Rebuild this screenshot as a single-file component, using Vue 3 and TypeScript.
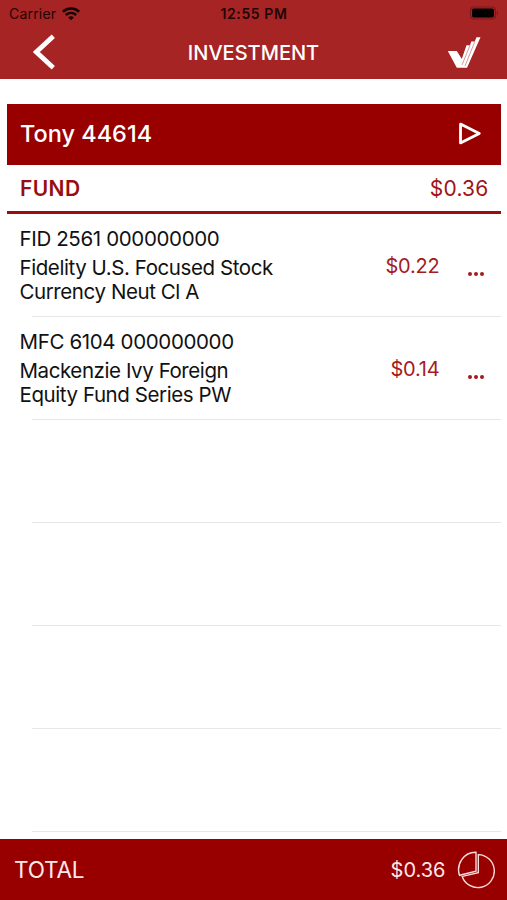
<script setup lang="ts">
interface Fund {
  code: string
  name: string[]
  amount: string
}

const funds: Fund[] = [
  { code: 'FID 2561 000000000', name: ['Fidelity U.S. Focused Stock', 'Currency Neut Cl A'], amount: '$0.22' },
  { code: 'MFC 6104 000000000', name: ['Mackenzie Ivy Foreign', 'Equity Fund Series PW'], amount: '$0.14' },
]
const emptyRows = 4
</script>

<template>
  <div class="screen">
    <header class="top">
      <div class="status">
        <div class="carrier">
          <span>Carrier</span>
          <svg class="wifi" width="18" height="14" viewBox="0 0 18 14">
            <path d="M.8 4.700C5.500.400 12.500.400 17.200 4.700" fill="none" stroke="#160303" stroke-width="2.600" />
            <path d="M3.800 8C6.900 5.200 11.100 5.200 14.200 8" fill="none" stroke="#160303" stroke-width="2.400" />
            <path d="M6.200 10.400C7.900 8.900 10.100 8.900 11.800 10.400L9 13.200Z" fill="#160303" />
          </svg>
        </div>
        <span class="clock">12:55 PM</span>
        <svg class="battery" width="30" height="15" viewBox="0 0 30 15">
          <rect x="1.500" y="1" width="25" height="12" rx="3.500" fill="none" stroke="#7d1719" stroke-width="1.200" />
          <rect x="3" y="2.500" width="22" height="9" rx="1.800" fill="#000" />
          <path d="M28 5Q29.800 7 28 9.100Z" fill="#5f1011" />
        </svg>
      </div>
      <div class="nav">
        <svg class="back" width="24" height="38" viewBox="0 0 24 38">
          <path d="M20.300 2.300L3.300 18L20.300 33.700" fill="none" stroke="#fff" stroke-width="4.800" />
        </svg>
        <h1>INVESTMENT</h1>
        <svg class="logo" width="34" height="32" viewBox="0 0 34 32">
          <path d="M.8 14H9.800L14.800 22L19.500 8.300H23L24.300 4.600H27.700L29.500.300H33.500L20 30.700H9.800Z" fill="#fff" />
          <path d="M15 28L23 8.300M18 29L27.800 4.600" fill="none" stroke="#c26b6c" stroke-width=".7" />
        </svg>
      </div>
    </header>

    <main>
      <div class="account">
        <span>Tony 44614</span>
        <svg width="24" height="24" viewBox="0 0 24 24">
          <path d="M2.500 2.100V20.900L21.300 11.500Z" fill="none" stroke="#fff" stroke-width="2.800" stroke-linejoin="round" />
        </svg>
      </div>
      <div class="group">
        <strong>FUND</strong>
        <span>$0.36</span>
      </div>
      <ul>
        <li v-for="fund in funds" :key="fund.code">
          <div class="info">
            <p class="code">{{ fund.code }}</p>
            <p v-for="line in fund.name" :key="line" class="line">{{ line }}</p>
          </div>
          <span class="amount">{{ fund.amount }}</span>
          <span class="more"><i /><i /><i /></span>
        </li>
        <li v-for="n in emptyRows" :key="n" />
      </ul>
    </main>

    <footer>
      <span class="total">TOTAL</span>
      <span class="sum">$0.36</span>
      <svg width="38" height="38" viewBox="0 0 38 38" fill="none" stroke="#f6dcdc" stroke-width="1.400">
        <path d="M19 1.200V20.300L2.500 24.300A17 17.500 0 0 1 19 1.200Z" />
        <path d="M21.300 3.600A16.500 16.500 0 1 1 5.200 25.400L21.300 21.700Z" />
      </svg>
    </footer>
  </div>
</template>

<style>
body {
  margin: 0;
  background: #fff;
}
</style>

<style scoped>
.screen {
  width: 507px;
  height: 900px;
  display: flex;
  flex-direction: column;
  overflow: hidden;
  background: #fff;
  font-family: Inter, 'Liberation Sans', sans-serif;
  color: #111;
}
.top {
  height: 79px;
  flex: none;
  background: #a72425;
}
.status {
  height: 27px;
  display: grid;
  grid-template-columns: 1fr auto 1fr;
  align-items: center;
  padding: 0 8px 0 9px;
  font-size: 14px;
  color: #220404;
}
.carrier {
  display: flex;
  align-items: center;
  gap: 6px;
  letter-spacing: 0.2px;
}
.clock {
  font-weight: 600;
  letter-spacing: 0.6px;
}
.battery {
  justify-self: end;
}
.nav {
  height: 52px;
  display: grid;
  grid-template-columns: 1fr auto 1fr;
  align-items: center;
  padding: 0 26px;
}
.back {
  margin-left: 7px;
}
h1 {
  margin: 0;
  font-size: 20px;
  line-height: 24px;
  font-weight: 500;
  color: #fff;
}
.logo {
  justify-self: end;
}
main {
  flex: 1;
  padding: 24.500px 6.500px 0 7px;
}
.account {
  height: 60px;
  display: flex;
  align-items: center;
  justify-content: space-between;
  padding: 0 19px 1px 13px;
  background: #980000;
  color: #fff;
  font-size: 23.500px;
  font-weight: 500;
}
.group {
  height: 45.500px;
  padding: 1px 12px 0 13px;
  display: flex;
  align-items: center;
  justify-content: space-between;
  border-bottom: 3px solid #980d10;
  color: #980d10;
  font-size: 21px;
}
.group strong {
  font-weight: 600;
  letter-spacing: 0.4px;
}
.group span {
  color: #a01316;
  letter-spacing: 0.2px;
}
ul {
  margin: 0;
  padding: 0;
  list-style: none;
}
li {
  height: 103px;
  box-sizing: border-box;
  display: flex;
  padding: 0 17px 0 12.500px;
  background: linear-gradient(#e7e7e7, #e7e7e7) 25px 100% / 100% 1px no-repeat;
}
.info {
  flex: 1;
  padding-top: 13px;
}
p {
  margin: 0;
  font-size: 20.500px;
  line-height: 24.500px;
  letter-spacing: -0.42px;
}
.code {
  margin-bottom: 4px;
  letter-spacing: -0.36px;
}
.amount {
  padding-top: 40px;
  font-size: 20px;
  line-height: 24px;
  letter-spacing: -0.2px;
  color: #a51b1e;
}
.more {
  display: flex;
  gap: 2px;
  padding: 57.500px 0 0 28px;
}
.more i {
  width: 4px;
  height: 4px;
  border-radius: 50%;
  background: #a51b1e;
}
footer {
  height: 61px;
  flex: none;
  display: flex;
  align-items: center;
  padding: 0 12px 0 14px;
  background: #980000;
  color: #fbe9e9;
}
.total {
  flex: 1;
  font-size: 22.500px;
  letter-spacing: -0.2px;
}
.sum {
  margin-right: 11.500px;
  font-size: 20px;
}
</style>
